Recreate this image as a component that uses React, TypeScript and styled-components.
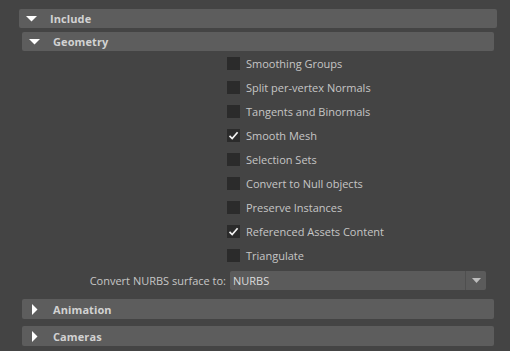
import React from "react";
import styled, { createGlobalStyle } from "styled-components";

const Global = createGlobalStyle`
  html, body { margin: 0; padding: 0; background: #444444; }
  body { font-family: "Open Sans", "Noto Sans", "DejaVu Sans", sans-serif; }
`;

const Page = styled.div`
  width: 510px;
  height: 351px;
  background: #444444;
  padding: 9px 13px 0 19px;
  box-sizing: border-box;
  overflow: hidden;
`;

const Section = styled.div`
  display: flex;
  flex-direction: column;
`;

const Header = styled.div<{ $h?: number }>`
  height: ${(p) => p.$h ?? 20}px;
  background: #5d5d5d;
  border-radius: 2px;
  display: flex;
  align-items: center;
  padding-left: 7px;
  gap: 13px;
  color: #d2d2d2;
  font-size: 11px;
  font-weight: 700;
  letter-spacing: 0.1px;
`;

const Arrow = styled.svg`
  width: 11px;
  height: 11px;
  flex: none;
`;

const Children = styled.div`
  display: flex;
  flex-direction: column;
  margin-top: 4px;
  padding: 0 3px;
`;

const Rows = styled.div`
  display: flex;
  flex-direction: column;
  padding-left: 205px;
`;

const Row = styled.label`
  height: 24px;
  display: flex;
  align-items: center;
  gap: 6px;
  color: #c6c6c6;
  font-size: 11px;
`;

const Box = styled.span`
  width: 13px;
  height: 13px;
  background: #2b2b2b;
  display: flex;
  align-items: center;
  justify-content: center;
  flex: none;
`;

const SelectRow = styled.div`
  display: flex;
  align-items: center;
  height: 19px;
  margin-top: 4px;
  padding-right: 8px;
`;

const SelectLabel = styled.span`
  width: 208px;
  text-align: right;
  color: #c6c6c6;
  font-size: 11px;
  padding-right: 4px;
  box-sizing: border-box;
`;

const Select = styled.div`
  flex: 1;
  height: 19px;
  background: #5b5b5b;
  border-radius: 2px;
  display: flex;
  align-items: center;
  color: #dcdcdc;
  font-size: 11px;
`;

const SelectValue = styled.span`
  flex: 1;
  padding-left: 3px;
`;

const SelectButton = styled.span`
  width: 20px;
  height: 19px;
  border-left: 1px solid #4f4f4f;
  display: flex;
  align-items: center;
  justify-content: center;
`;

const Sub = styled.div`
  display: flex;
  flex-direction: column;
  gap: 7px;
  margin-top: 9px;
`;

const Down = () => (
  <Arrow viewBox="0 0 11 11">
    <polygon points="0,3 11,3 5.5,8.5" fill="#ffffff" />
  </Arrow>
);
const Right = () => (
  <Arrow viewBox="0 0 11 11">
    <polygon points="3,0 8.5,5.5 3,11" fill="#ffffff" />
  </Arrow>
);

const Check = ({ on }: { on?: boolean }) => (
  <Box>
    {on && (
      <svg width="13" height="13" viewBox="0 0 13 13">
        <path d="M2.5 6.8 L5.2 9.5 L10.6 3.2" stroke="#f2f2f2" strokeWidth="1.7" fill="none" />
      </svg>
    )}
  </Box>
);

const options: [string, boolean][] = [
  ["Smoothing Groups", false],
  ["Split per-vertex Normals", false],
  ["Tangents and Binormals", false],
  ["Smooth Mesh", true],
  ["Selection Sets", false],
  ["Convert to Null objects", false],
  ["Preserve Instances", false],
  ["Referenced Assets Content", true],
  ["Triangulate", false],
];

export default function App() {
  return (
    <>
      <Global />
      <Page>
        <Section>
          <Header $h={19}>
            <Down />
            Include
          </Header>
          <Children>
            <Header $h={19}>
              <Down />
              Geometry
            </Header>
            <Rows>
              {options.map(([t, on]) => (
                <Row key={t}>
                  <Check on={on} />
                  {t}
                </Row>
              ))}
            </Rows>
            <SelectRow>
              <SelectLabel>Convert NURBS surface to:</SelectLabel>
              <Select>
                <SelectValue>NURBS</SelectValue>
                <SelectButton>
                  <svg width="9" height="5" viewBox="0 0 9 5">
                    <polygon points="0,0 9,0 4.5,5" fill="#bdbdbd" />
                  </svg>
                </SelectButton>
              </Select>
            </SelectRow>
            <Sub>
              <Header>
                <Right />
                Animation
              </Header>
              <Header>
                <Right />
                Cameras
              </Header>
            </Sub>
          </Children>
        </Section>
      </Page>
    </>
  );
}
